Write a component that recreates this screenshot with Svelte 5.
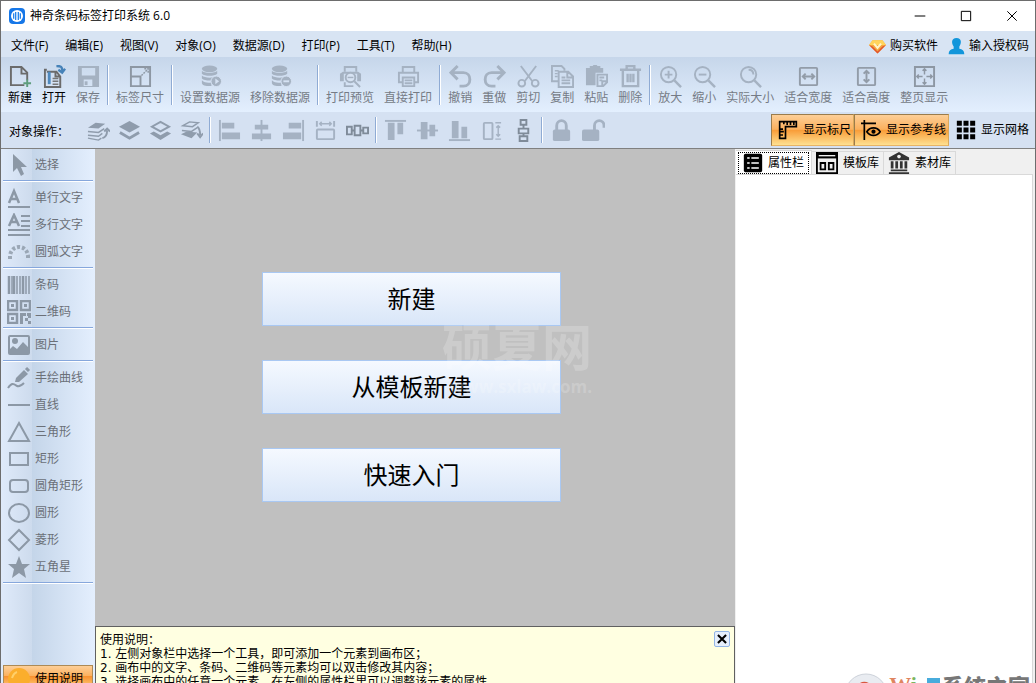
<script lang="ts">
	interface Tool {
		icon: string;
		label: string;
		enabled?: boolean;
	}

	const menus = ["文件(F)", "编辑(E)", "视图(V)", "对象(O)", "数据源(D)", "打印(P)", "工具(T)", "帮助(H)"];

	const toolGroups: Tool[][] = [
		[
			{ icon: "new", label: "新建", enabled: true },
			{ icon: "open", label: "打开", enabled: true },
			{ icon: "save", label: "保存" },
		],
		[{ icon: "size", label: "标签尺寸" }],
		[
			{ icon: "dbSet", label: "设置数据源" },
			{ icon: "dbRemove", label: "移除数据源" },
		],
		[
			{ icon: "preview", label: "打印预览" },
			{ icon: "print", label: "直接打印" },
		],
		[
			{ icon: "undo", label: "撤销" },
			{ icon: "redo", label: "重做" },
			{ icon: "cut", label: "剪切" },
			{ icon: "copy", label: "复制" },
			{ icon: "paste", label: "粘贴" },
			{ icon: "trash", label: "删除" },
		],
		[
			{ icon: "zoomIn", label: "放大" },
			{ icon: "zoomOut", label: "缩小" },
			{ icon: "zoomReal", label: "实际大小" },
			{ icon: "fitWidth", label: "适合宽度" },
			{ icon: "fitHeight", label: "适合高度" },
			{ icon: "fitPage", label: "整页显示" },
		],
	];

	const opGroups: Tool[][] = [
		[
			{ icon: "layerUp", label: "上移一层" },
			{ icon: "layerTop", label: "置于顶层" },
			{ icon: "layerBottom", label: "置于底层" },
			{ icon: "layerDown", label: "下移一层" },
		],
		[
			{ icon: "alignLeft", label: "左对齐" },
			{ icon: "alignCenter", label: "水平居中" },
			{ icon: "alignRight", label: "右对齐" },
			{ icon: "sameWidth", label: "等宽" },
			{ icon: "spreadH", label: "水平分布" },
		],
		[
			{ icon: "alignTop", label: "顶对齐" },
			{ icon: "alignMiddle", label: "垂直居中" },
			{ icon: "alignBottom", label: "底对齐" },
			{ icon: "sameHeight", label: "等高" },
			{ icon: "spreadV", label: "垂直分布" },
		],
		[
			{ icon: "lock", label: "锁定" },
			{ icon: "unlock", label: "解锁" },
		],
	];

	const sideGroups: Tool[][] = [
		[{ icon: "cursor", label: "选择" }],
		[
			{ icon: "textLine", label: "单行文字" },
			{ icon: "textMulti", label: "多行文字" },
			{ icon: "textArc", label: "圆弧文字" },
		],
		[
			{ icon: "barcode", label: "条码" },
			{ icon: "qrcode", label: "二维码" },
		],
		[{ icon: "image", label: "图片" }],
		[
			{ icon: "pencil", label: "手绘曲线" },
			{ icon: "line", label: "直线" },
			{ icon: "triangle", label: "三角形" },
			{ icon: "rect", label: "矩形" },
			{ icon: "roundRect", label: "圆角矩形" },
			{ icon: "circle", label: "圆形" },
			{ icon: "diamond", label: "菱形" },
			{ icon: "star", label: "五角星" },
		],
	];

	const tabs = [
		{ icon: "list", label: "属性栏" },
		{ icon: "template", label: "模板库" },
		{ icon: "bank", label: "素材库" },
	];

	const starters = ["新建", "从模板新建", "快速入门"];

	const helpLines = [
		"1. 左侧对象栏中选择一个工具，即可添加一个元素到画布区；",
		"2. 画布中的文字、条码、二维码等元素均可以双击修改其内容；",
		"3. 选择画布中的任意一个元素，在左侧的属性栏里可以调整该元素的属性。",
	];

	let activeTab = $state(0);
	let showRuler = $state(true);
	let showGuides = $state(true);
	let showGrid = $state(false);
	let showHelp = $state(true);

	const fill = 'fill="currentColor" stroke="none"';
	const db = `<ellipse cx="11" cy="4" rx="8" ry="3.500" ${fill}/><path d="M3 6c2 3 14 3 16 0v3c-3 3-13 3-16 0zM3 11c3 3 13 3 16 0v3c-3 3-13 3-16 0zM3 16c3 3 8 3 10 2v4c-4 0-9 0-10-3z" ${fill}/><circle cx="18" cy="17" r="5.500" ${fill} stroke="#d5e2f3" style="stroke:#d5e2f3;stroke-width:1"/>`;
	const lens = '<circle cx="10" cy="10" r="8"/><path d="M16 16l7 7" stroke-width="2.5"/>';
	const printer = '<path d="M6 8V2h12v6M6 18H2V8h20v10h-4"/><path d="M6 13h12v9H6zM8 16h8M8 19h8"/>';

	// 24x24 drawings, stroked with the current colour unless they say otherwise
	const icons: Record<string, string> = {
		new: '<path d="M16 21H2V2h11l6 6v8M13 2v7h6" stroke="#6b6b6b"/><path d="M19 15v8M15 19h8" stroke="#5e9d7d"/>',
		open: '<path d="M4 5H2v18h16V12l-4-5H4M13 7v5h5" stroke="#6b6b6b"/><path d="M5 7h3v13H5z" fill="#4f89bd" stroke="none"/><path d="M10 14h6M10 17h6M10 20h6" stroke="#777" stroke-width="1.5"/><path d="M14 1c5 0 6 1 6 5M16 5l4 3 3-4" stroke="#4682b8" stroke-width="2.5"/>',
		save: `<path d="M1 1h22v22H1zM5 3v8h14V3zM7 15v7h9v-7z" ${fill} fill-rule="evenodd"/><path d="M8 17h3v4H8z" ${fill}/>`,
		size: '<path d="M2 2h20v20H2zM2 12h10v10" stroke="#8d97a3" stroke-width="2"/><path d="M13 11l7-7M16 4h4v4" stroke="#8d97a3" stroke-dasharray="2 1" stroke-width="1.5"/>',
		dbSet: `${db}<path d="M17 14l4 3-4 3z" fill="#d5e2f3" stroke="none"/>`,
		dbRemove: `${db}<path d="M15 17h6" stroke="#d5e2f3"/>`,
		preview: `<path d="M6 7V2h12v5M6 18v4h9"/><path d="M1 9l3-2h16l3 2v8h-4V9H5v8H1z" ${fill}/><circle cx="12" cy="13" r="5" fill="#d7e3f3"/><path d="M16 17l6 6"/><path d="M9 13h6" stroke-width="1.5"/>`,
		print: printer,
		undo: '<path d="M9 1L2 8l7 7M3 8h12c9 0 9 14 0 14h-4" stroke-width="3"/>',
		redo: '<path d="M15 1l7 7-7 7M21 8H9c-9 0-9 14 0 14h4" stroke-width="3"/>',
		cut: '<circle cx="5" cy="19" r="3.500"/><circle cx="19" cy="19" r="3.500"/><path d="M4 1l12 16M20 1L8 17"/>',
		copy: '<path d="M8 17H1V1h10l3 3v2"/><path d="M8 7h10l5 5v11H8zM17 7v6h5M11 13h4M11 16h9M11 19h9"/><path d="M4 6h4M4 9h3M4 12h3" stroke-width="1.5"/>',
		paste: `<path d="M1 3h4V1h3c1-2 4-2 5 0h3v2h3v5h-8v13H1z" ${fill}/><path d="M13 10h10v8l-4 4h-6zM23 17h-5v5M15 13h5M15 16h3"/>`,
		trash: '<path d="M1 5h22M8 5V1h8v4M4 5v17h16V5M9 9v9M12 9v9M15 9v9" stroke-width="2.500"/>',
		zoomIn: `${lens}<path d="M6 10h8M10 6v8"/>`,
		zoomOut: `${lens}<path d="M6 10h8"/>`,
		zoomReal: `${lens}<path d="M10 5c3 0 5 2 5 5"/>`,
		fitWidth: '<g stroke="#929ca8"><rect x="3" y="3" width="18" height="18" rx="1"/><path d="M6 12h12M9 9l-3 3 3 3M15 9l3 3-3 3"/></g>',
		fitHeight: '<g stroke="#929ca8"><rect x="3" y="3" width="18" height="18" rx="1"/><path d="M12 6v12M9 9l3-3 3 3M9 15l3 3 3-3"/></g>',
		fitPage: '<g stroke="#8d97a3"><path d="M2 2h20v20H2z"/><path d="M12 4v6M12 14v6M4 12h6M14 12h6M10 6l2-2 2 2M10 18l2 2 2-2M6 10l-2 2 2 2M18 10l2 2-2 2" stroke-width="1.5"/></g>',
		layerUp: `<path d="M1 9l8-5 10 1-7 5z" ${fill}/><path d="M1 13l11 1 6-4M1 17l11 1 4-3M1 20l11 2 3-2" stroke-width="1.5"/><path d="M16 20c4-1 5-4 5-8M18 13l3-3 3 3" stroke-width="2"/>`,
		layerTop: `<path d="M12 2l11 6-11 6L1 8z" ${fill}/><path d="M2 14l10 6 10-6" stroke-width="3"/>`,
		layerBottom: `<path d="M12 3l9 5-9 5-9-5z"/><path d="M5 13l7 4 7-4 4 2-11 7-11-7z" ${fill}/>`,
		layerDown: `<path d="M3 7l7-4 9 1-6 4zM2 12l10 1 6-4" stroke-width="1.5"/><path d="M1 16l6-3 11 1-6 6z" ${fill}/><path d="M18 8c3 2 3 5 3 9M18 15l3 4 3-4"/>`,
		alignLeft: `<path d="M2 1v22"/><path d="M4 4h13v6H4zM4 14h19v7H4z" ${fill}/>`,
		alignCenter: `<path d="M12 1v22"/><path d="M5 6h14v5H5zM2 15h20v6H2z" ${fill}/>`,
		alignRight: `<path d="M22 1v22"/><path d="M7 4h13v6H7zM1 14h19v7H1z" ${fill}/>`,
		sameWidth: '<path d="M3 2v6M21 2v6" /><path d="M6 5h12M8 3L6 5l2 2M16 3l2 2-2 2" stroke-width="1.5"/><rect x="3" y="11" width="18" height="10" rx="1"/>',
		spreadH: '<path d="M1 8h5v8H1zM9 7h6v10H9zM18 9h5v6h-5zM6 12h3M15 12h3" stroke="#7f8b99"/>',
		alignTop: `<path d="M1 2h22"/><path d="M4 4h7v18H4zM14 4h6v12h-6z" ${fill}/>`,
		alignMiddle: `<path d="M1 12h22"/><path d="M5 3h7v18H5zM14 6h6v12h-6z" ${fill}/>`,
		alignBottom: `<path d="M1 22h22"/><path d="M4 2h7v18H4zM14 8h6v12h-6z" ${fill}/>`,
		sameHeight: '<rect x="4" y="4" width="9" height="17" rx="1"/><path d="M16 4h6M16 21h6M19 7v11M17 9l2-2 2 2M17 16l2 2 2-2" stroke-width="1.5"/>',
		spreadV: '<path d="M9 1h6v5H9zM7 10h10v5H7zM8 18h8v5H8zM12 6v4M12 15v3" stroke="#7f8b99"/>',
		lock: `<rect x="3" y="11" width="18" height="12" rx="2" ${fill}/><path d="M7 12V7c0-7 10-7 10 0v5" stroke-width="3"/>`,
		unlock: `<rect x="0" y="11" width="18" height="12" rx="2" ${fill}/><path d="M13 12V7c0-7 10-7 10 0v2" stroke-width="3"/>`,
		cursor: `<path d="M6 1v18l4-4 4 8 3-2-3-7h6z" ${fill}/>`,
		textLine: '<path d="M2 17L7 5l5 12M4 13h6" stroke-width="2.500"/><path d="M1 21h22"/>',
		textMulti: '<path d="M2 13L7 2l5 11M4 9h6" stroke-width="2.500"/><path d="M14 3h9M14 8h9M14 13h9M1 17h22M1 22h22"/>',
		textArc: '<path d="M3 19v-3C4 4 20 4 21 16v3" stroke-width="4" stroke-dasharray="3 2" opacity=".8"/>',
		barcode: '<path d="M2 3v18M7 3v18M16 3v18" stroke-width="2.5"/><path d="M5 3v18M10 3v18M13 3v18M19 3v18M22 3v18" stroke-width="1.500"/>',
		qrcode: `<path d="M1 1h9v9H1zM14 1h9v9h-9zM1 14h9v9H1z" stroke-width="2.500"/><path d="M4 4h3v3H4zM17 4h3v3h-3zM4 17h3v3H4zM13 13h6v3h-3v8h-3zM20 13h4v5h-3v-2h-1zM18 18h3v3h-3zM21 21h3v3h-3z" ${fill}/>`,
		image: `<rect x="2" y="3" width="20" height="18" rx="1"/><circle cx="8" cy="8" r="3" ${fill}/><path d="M2 17l4-4 4 3 6-7 6 6v6H2z" ${fill}/>`,
		pencil: `<path d="M8 16l1-4 8-8 4 4-9 8z" ${fill}/><path d="M19 2l3 3" stroke-width="3"/><path d="M1 22c4-6 6-4 9-2 3 1 5-1 7-3"/>`,
		line: '<path d="M1 12h22"/>',
		triangle: '<path d="M12 3l10 18H2z"/>',
		rect: '<path d="M3 6h18v12H3z"/>',
		roundRect: '<rect x="3" y="6" width="18" height="12" rx="3"/>',
		circle: '<ellipse cx="12" cy="12" rx="10" ry="9"/>',
		diamond: '<path d="M12 2l10 10-10 10L2 12z"/>',
		star: `<path d="M12 1l3 8h8l-6 5 2 9-7-5-7 5 2-9-6-5h8z" ${fill}/>`,
		ruler: '<path d="M2 2h20v6H9v14H2zM7 3v2M11 3v3M15 3v3M19 3v3M3 11h3M3 14h4M3 18h3"/>',
		guides: `<path d="M4 0v24M0 4h18"/><path d="M7 14c4-6 12-6 16 0-4 6-12 6-16 0z"/><circle cx="15" cy="14" r="2.500" ${fill}/>`,
		grid: `<path d="M1 1h6v6H1zM9 1h6v6H9zM17 1h6v6h-6zM1 9h6v6H1zM9 9h6v6H9zM17 9h6v6h-6zM1 17h6v6H1zM9 17h6v6H9zM17 17h6v6h-6z" ${fill}/>`,
		list: `<rect x="1" y="1" width="22" height="22" rx="2" ${fill}/><path d="M5 6h3M10 6h9M5 12h3M10 12h9M5 18h3M10 18h9" stroke="#fff"/>`,
		template: `<path d="M1 1h22v22H1z"/><path d="M0 0h24v7H0z" ${fill}/><path d="M3 4h18" stroke="#f0f0f0" stroke-width="1.5"/><path d="M5 12h5v7H5zM14 12h5v7h-5z"/>`,
		bank: `<g fill="#333" stroke="none"><path d="M12 0l11 6v3H1V6zM3 19h18v2H3zM1 22h22v2H1zM3 10h3v8H3zM8 10h3v8H8zM13 10h3v8h-3zM18 10h3v8h-3z"/></g><circle cx="12" cy="5" r="2" fill="#eee" stroke="none"/>`,
		buy: '<path d="M5 3h14l5 7-12 12L0 10z" fill="#f6a73b" stroke="none"/><path d="M5 3h14l5 7H0z" fill="#ffd45c" stroke="none"/><path d="M0 10l12 12 12-12-5 2-7 7-7-7z" fill="#e1542f" stroke="none"/><path d="M7 8l5 6 5-6" stroke="#fff5ca" stroke-width="3"/>',
		user: '<path d="M12 0c8 0 7 8 4 12v3c4 1 7 2 7 8H1c0-6 3-7 7-8v-3C5 8 4 0 12 0z" fill="#1296db" stroke="none"/>',
		bulb: '<circle cx="12" cy="12" r="11" fill="#fbae2c" stroke="none"/><path d="M5 11c1-3 2-5 5-6" stroke="#ffd06a"/>',
		app: '<rect width="24" height="24" rx="6" fill="#1677e8" stroke="none"/><circle cx="12" cy="12" r="9" fill="#fff" stroke="none"/><path d="M7 8v8M10 6v12M14 6v12M17 8v8" stroke="#2986ec" stroke-width="2"/>',
		minimize: '<path d="M4 12h16" stroke-width="1.5"/>',
		maximize: '<path d="M5 5h14v14H5z" stroke-width="1.5"/>',
		close: '<path d="M5 5l14 14M19 5L5 19" stroke-width="1.5"/>',
		dismiss: '<path d="M5 5l14 14M19 5L5 19" stroke-width="3.500"/>',
	};
</script>

{#snippet icon(name: string)}
	<svg class="icon" viewBox="0 0 24 24" fill="none" stroke="currentColor" stroke-width="2" aria-hidden="true">
		{@html icons[name]}
	</svg>
{/snippet}

<div class="page">
	<div class="window">
		<header class="title-bar">
			{@render icon("app")}
			<span class="title">神奇条码标签打印系统 6.0</span>
			<button aria-label="最小化">{@render icon("minimize")}</button>
			<button aria-label="最大化">{@render icon("maximize")}</button>
			<button aria-label="关闭">{@render icon("close")}</button>
		</header>

		<nav class="menu-bar">
			{#each menus as menu}
				<button>{menu}</button>
			{/each}
			<div class="account">
				<button>{@render icon("buy")}购买软件</button>
				<button>{@render icon("user")}输入授权码</button>
			</div>
		</nav>

		<div class="toolbar">
			{#each toolGroups as group, i}
				{#if i > 0}<span class="sep"></span>{/if}
				{#each group as tool}
					<button class="tool" disabled={!tool.enabled}>
						{@render icon(tool.icon)}
						<span>{tool.label}</span>
					</button>
				{/each}
			{/each}
		</div>

		<div class="op-bar">
			<span class="op-label">对象操作：</span>
			{#each opGroups as group, i}
				{#if i > 0}<span class="sep"></span>{/if}
				<div class="op-group" class:layers={i === 0} class:pale={i > 0}>
					{#each group as op}
						<button class="op" disabled aria-label={op.label}>{@render icon(op.icon)}</button>
					{/each}
				</div>
			{/each}
			<div class="toggles">
				<button class="toggle" class:on={showRuler} aria-pressed={showRuler} onclick={() => (showRuler = !showRuler)}>
					{@render icon("ruler")}显示标尺
				</button>
				<button class="toggle" class:on={showGuides} aria-pressed={showGuides} onclick={() => (showGuides = !showGuides)}>
					{@render icon("guides")}显示参考线
				</button>
				<button class="toggle" class:on={showGrid} aria-pressed={showGrid} onclick={() => (showGrid = !showGrid)}>
					{@render icon("grid")}显示网格
				</button>
			</div>
		</div>

		<div class="body">
			<aside class="sidebar">
				{#each sideGroups as group}
					{#each group as tool}
						<button class="side-tool" disabled>{@render icon(tool.icon)}{tool.label}</button>
					{/each}
					<hr />
				{/each}
				<button class="side-tool guide" onclick={() => (showHelp = !showHelp)}>
					{@render icon("bulb")}使用说明
				</button>
			</aside>

			<main class="workspace">
				<div class="canvas">
					{#each starters as label}
						<button class="starter">{label}</button>
					{/each}
					<div class="watermark">
						<strong>硕夏网</strong>
						<span>www.sxlaw.com.</span>
					</div>
				</div>
				{#if showHelp}
					<section class="help">
						<div class="help-text">
							<p>使用说明：</p>
							{#each helpLines as line}
								<p>{line}</p>
							{/each}
						</div>
						<button class="dismiss" aria-label="关闭说明" onclick={() => (showHelp = false)}>
							{@render icon("dismiss")}
						</button>
					</section>
				{/if}
			</main>

			<aside class="panel">
				<div class="tabs" role="tablist">
					{#each tabs as tab, i}
						<button role="tab" class="tab" class:active={activeTab === i} aria-selected={activeTab === i} onclick={() => (activeTab = i)}>
							<span>{@render icon(tab.icon)}{tab.label}</span>
						</button>
					{/each}
				</div>
				<div class="pane" role="tabpanel"></div>
			</aside>
		</div>
	</div>

	<div class="site-mark">
		<svg viewBox="0 0 44 44" width="44" height="44" aria-hidden="true">
			<circle cx="22" cy="22" r="21" fill="#e9ecf1" stroke="#cdd2da" />
			<path d="M10 20c3-15 17-15 22 0z" fill="#d9573f" />
		</svg>
		<b class="w">W<i>i</i></b>
		<span class="flag"></span>
		<b>系统之家</b>
	</div>
</div>

<style>
	:global(body) {
		margin: 0;
	}

	.page {
		position: relative;
		height: 100vh;
		overflow: hidden;
		font: 12px/16px "Open Sans", "Noto Sans CJK SC", sans-serif;
		color: #000;
	}

	/* the lower edge of the window hangs below the screen */
	.window {
		box-sizing: border-box;
		height: calc(100vh + 12px);
		display: flex;
		flex-direction: column;
		border: 1px solid #6d6d6d;
		background: #d5e2f3;
	}

	button {
		display: flex;
		align-items: center;
		padding: 0;
		border: 0;
		background: none;
		font: inherit;
		color: inherit;
		white-space: nowrap;
	}

	.icon {
		display: block;
		flex: none;
		width: 24px;
		height: 24px;
	}

	.title-bar {
		display: flex;
		align-items: center;
		height: 30px;
		padding-left: 8px;
		background: #fff;
	}
	.title-bar > .icon {
		width: 16px;
		height: 16px;
	}
	.title {
		flex: 1;
		margin-left: 5px;
	}
	.title-bar button {
		justify-content: center;
		width: 46px;
		height: 30px;
	}
	.title-bar button .icon {
		width: 16px;
		height: 16px;
	}

	.menu-bar {
		display: flex;
		align-items: center;
		gap: 17px;
		height: 26px;
		padding: 4px 6px 0 10px;
		box-sizing: border-box;
		background: #d8e4f3;
	}
	.account {
		display: flex;
		gap: 10px;
		margin-left: auto;
	}
	.account button {
		gap: 4px;
	}
	.account .icon {
		width: 17px;
		height: 17px;
	}

	.toolbar {
		display: flex;
		align-items: center;
		height: 55px;
		padding-left: 2px;
		background: linear-gradient(#c6d6ea, #e3effe);
	}
	.tool {
		flex-direction: column;
		gap: 2px;
		padding: 2px 5px 0;
	}
	.tool .icon {
		width: 23px;
		height: 23px;
	}
	.tool:disabled {
		color: #757b85;
	}
	.tool:disabled .icon {
		color: #a5b2c2;
	}
	.sep {
		flex: none;
		width: 1px;
		height: 40px;
		margin: 0 2px;
		background: #8fabd4;
		border-right: 1px solid #fff;
	}

	.op-bar {
		display: flex;
		align-items: center;
		height: 36px;
		padding-left: 8px;
		border-bottom: 1px solid #808080;
		background: #d5e1f2;
	}
	.op-bar .sep {
		height: 26px;
	}
	.op-label {
		width: 74px;
		padding-top: 4px;
	}
	.op-group {
		display: flex;
	}
	.op {
		justify-content: center;
		width: 32px;
		color: #8f9cac;
	}
	.op .icon {
		width: 23px;
		height: 23px;
	}
	.layers .op {
		width: 31px;
	}
	.pale .op {
		color: #a5b2c3;
	}
	.toggles {
		display: flex;
		align-items: center;
		margin-left: auto;
		padding-right: 3px;
	}
	.toggle {
		box-sizing: border-box;
		height: 32px;
		gap: 5px;
		padding: 0 2px 0 6px;
		border: 1px solid transparent;
	}
	.toggle .icon {
		width: 20px;
		height: 20px;
	}
	.toggle.on {
		border-color: #9b7c4c #d9a95c #e8b464 #9b7c4c;
		background: linear-gradient(#fdcf98, #fbb05d 48%, #f99c37 50%, #fee091) padding-box;
	}

	.body {
		display: flex;
		flex: 1;
		min-height: 0;
	}

	.sidebar {
		box-sizing: border-box;
		display: flex;
		flex-direction: column;
		width: 94px;
		padding: 2px 2px 2px;
		background:
			linear-gradient(90deg, #dfeafa, #cddbed) left / 31px 100% no-repeat,
			linear-gradient(90deg, #c4d5e9, #e4effe) right / 63px 100% no-repeat;
	}
	.side-tool {
		flex: none;
		box-sizing: border-box;
		height: 27px;
		gap: 4px;
		padding-left: 4px;
		color: #6b7078;
	}
	.side-tool .icon {
		color: #8c98a6;
	}
	.sidebar hr {
		width: 100%;
		height: 1px;
		margin: 2px 0;
		border: 0;
		border-bottom: 1px solid #fff;
		background: #86a7dc;
	}
	.guide {
		margin-top: auto;
		border: 1px solid #ad8a55;
		padding-left: 3px;
		color: #000;
		background: linear-gradient(#fdcf98, #fbb05d 40%, #f99230 42%, #fee091);
	}

	.workspace {
		flex: 1;
		display: flex;
		flex-direction: column;
		min-width: 0;
		background: #c0c0c0;
	}
	.canvas {
		position: relative;
		flex: 1;
		display: flex;
		flex-direction: column;
		align-items: center;
		justify-content: center;
		gap: 34px;
		padding: 0 7px 1px 0;
	}
	.starter {
		box-sizing: border-box;
		justify-content: center;
		width: 299px;
		height: 54px;
		border: 1px solid #a9c8f3;
		background: linear-gradient(#f5f9ff, #d9e6f8);
		font-size: 24px;
		line-height: 32px;
	}
	.watermark {
		position: absolute;
		left: 347px;
		top: 170px;
		display: flex;
		flex-direction: column;
		color: rgba(255, 255, 255, 0.2);
		pointer-events: none;
	}
	.watermark strong {
		font-size: 50px;
		line-height: 56px;
	}
	.watermark span {
		align-self: flex-end;
		font-size: 17px;
		font-weight: 700;
		line-height: 24px;
	}

	.help {
		box-sizing: border-box;
		display: flex;
		align-items: flex-start;
		justify-content: space-between;
		height: 68px;
		padding: 4px 4px 0;
		border: 1px solid #606060;
		border-bottom: 0;
		background: #ffffe1;
		font-family: "DejaVu Sans", "Noto Sans CJK SC", sans-serif;
		line-height: 14px;
	}
	.help-text {
		padding-top: 2px;
	}
	.help p {
		margin: 0;
	}
	.dismiss {
		box-sizing: border-box;
		justify-content: center;
		width: 16px;
		height: 16px;
		border: 1px solid #93b5e6;
		border-radius: 2px;
		background: #e6effc;
	}
	.dismiss .icon {
		width: 14px;
		height: 14px;
	}

	.panel {
		box-sizing: border-box;
		display: flex;
		flex-direction: column;
		width: 300px;
		padding: 0 2px 0 1px;
		background: #f0f0f0;
	}
	.tabs {
		display: flex;
		align-items: flex-end;
		height: 25px;
	}
	.tab {
		box-sizing: border-box;
		height: 23px;
		padding: 0 4px;
		border: 1px solid #d9d9d9;
		border-left: 0;
		border-bottom: 0;
	}
	.tab span {
		display: flex;
		align-items: center;
		gap: 5px;
	}
	.tab .icon {
		width: 22px;
		height: 22px;
	}
	.tab.active {
		height: 25px;
		margin-bottom: -1px;
		padding: 0 2px;
		background: #fff;
	}
	.tab.active span {
		height: 20px;
		padding: 0 4px;
		border: 1px dotted #000;
	}
	.tab.active .icon {
		width: 20px;
		height: 20px;
	}
	.pane {
		flex: 1;
		border-top: 1px solid #d9d9d9;
		border-right: 1px solid #d9d9d9;
		background: #fff;
	}

	.site-mark {
		position: absolute;
		right: 6px;
		top: calc(100% - 10px);
		display: flex;
		align-items: flex-start;
		color: #777;
		font-size: 22px;
		font-weight: 900;
		line-height: 26px;
	}
	.site-mark svg {
		margin-right: 1px;
	}
	.site-mark .w {
		margin-right: 10px;
		color: #df8560;
		font-family: "Liberation Serif", serif;
		line-height: 24px;
	}
	.w i {
		color: #7bb661;
		font-style: normal;
	}
	.flag {
		width: 13px;
		height: 12px;
		margin: 5px 2px 0 0;
		background: #48acdc;
	}
</style>
